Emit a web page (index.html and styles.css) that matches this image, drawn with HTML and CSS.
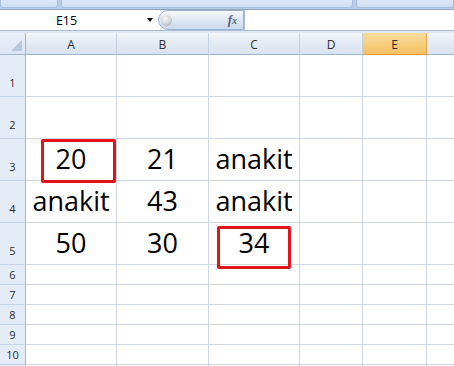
FILE: index.html
```html
<!DOCTYPE html>
<html>
<head>
<meta charset="utf-8">
<link rel="stylesheet" href="styles.css">
</head>
<body>
<div class="app">
  <div class="ribbon">
    <div class="tab t1"></div>
    <div class="tab t2"></div>
    <div class="tab t3"></div>
  </div>
  <div class="fbar">
    <div class="namebox"><span class="name">E15</span><span class="arrow"></span></div>
    <div class="pill"><span class="knob"></span><span class="fx">f<span class="x">x</span></span></div>
    <div class="input"></div>
  </div>
  <div class="gap"></div>
  <div class="sheet">
    <div class="grid">
      <div class="corner"><span class="tri"></span></div>
      <div class="ch">A</div><div class="ch">B</div><div class="ch">C</div><div class="ch">D</div><div class="ch sel">E</div><div class="ch last"></div>

      <div class="rh tall">1</div><div class="c tall"></div><div class="c tall"></div><div class="c tall"></div><div class="c tall"></div><div class="c tall"></div><div class="c tall last"></div>
      <div class="rh tall">2</div><div class="c tall"></div><div class="c tall"></div><div class="c tall"></div><div class="c tall"></div><div class="c tall"></div><div class="c tall last"></div>
      <div class="rh tall">3</div><div class="c tall">20</div><div class="c tall">21</div><div class="c tall">anakit</div><div class="c tall"></div><div class="c tall"></div><div class="c tall last"></div>
      <div class="rh tall">4</div><div class="c tall">anakit</div><div class="c tall">43</div><div class="c tall">anakit</div><div class="c tall"></div><div class="c tall"></div><div class="c tall last"></div>
      <div class="rh tall">5</div><div class="c tall">50</div><div class="c tall">30</div><div class="c tall">34</div><div class="c tall"></div><div class="c tall"></div><div class="c tall last"></div>

      <div class="rh">6</div><div class="c"></div><div class="c"></div><div class="c"></div><div class="c"></div><div class="c"></div><div class="c last"></div>
      <div class="rh">7</div><div class="c"></div><div class="c"></div><div class="c"></div><div class="c"></div><div class="c"></div><div class="c last"></div>
      <div class="rh">8</div><div class="c"></div><div class="c"></div><div class="c"></div><div class="c"></div><div class="c"></div><div class="c last"></div>
      <div class="rh">9</div><div class="c"></div><div class="c"></div><div class="c"></div><div class="c"></div><div class="c"></div><div class="c last"></div>
      <div class="rh">10</div><div class="c"></div><div class="c"></div><div class="c"></div><div class="c"></div><div class="c"></div><div class="c last"></div>
      <div class="rh"></div><div class="c"></div><div class="c"></div><div class="c"></div><div class="c"></div><div class="c"></div><div class="c last"></div>
    </div>
    <div class="mark mark1"></div>
    <div class="mark mark2"></div>
  </div>
</div>
</body>
</html>
```
FILE: styles.css
```css
* { box-sizing: border-box; }
html, body { margin: 0; padding: 0; background: #fff; }
.app {
  width: 454px;
  height: 366px;
  overflow: hidden;
  font-family: "Open Sans", "Noto Sans", sans-serif;
}
.ribbon {
  height: 9px;
  display: flex;
  gap: 3px;
  background: #b9cde6;
}
.tab {
  height: 8px;
  background: linear-gradient(#dbe7f6, #cfdef2);
  border: 1px solid #a9bfdc;
  border-top: none;
  border-radius: 0 0 3px 3px;
}
.t1 { width: 58px; }
.t2 { width: 292px; }
.t3 { flex: 1; }
.fbar {
  height: 22px;
  display: flex;
  border-top: 1px solid #8ba3c4;
  border-bottom: 1px solid #a7bbd6;
  background: #fff;
}
.namebox {
  width: 158px;
  display: flex;
  align-items: center;
  font-size: 12.5px;
  color: #000;
}
.name { flex: 1; text-align: center; padding-right: 14px; padding-top: 1px; }
.arrow {
  width: 0; height: 0;
  border-left: 3.5px solid transparent;
  border-right: 3.5px solid transparent;
  border-top: 4px solid #111;
  margin-right: 5px;
}
.pill {
  width: 86px;
  height: 20px;
  border: 1px solid #9fb3cf;
  border-radius: 10px 0 0 10px;
  background: linear-gradient(#f5f8fc, #dce6f3 55%, #c9d8ec);
  display: flex;
  align-items: center;
  justify-content: space-between;
  padding: 0 6px 0 2px;
}
.knob {
  width: 11px; height: 11px;
  border-radius: 50%;
  background: radial-gradient(circle at 40% 35%, #fafafa, #c9cdd3 60%, #9ea5ae);
}
.fx {
  font-family: "Liberation Serif", "DejaVu Serif", serif;
  font-style: italic;
  font-weight: bold;
  font-size: 13px;
  color: #5a6478;
}
.fx .x { font-size: 10px; }
.input { flex: 1; border-left: 1px solid #a7bbd6; }
.gap { height: 2px; background: #dfe8f4; }
.sheet { position: relative; }
.grid {
  display: grid;
  grid-template-columns: 26px 91px 92px 91px 63px 64px 1fr;
  grid-template-rows: 22px repeat(5, 42px) repeat(6, 20px);
}
.corner {
  background: linear-gradient(#e9eff8, #dce6f3);
  border-right: 1px solid #9eb6ce;
  border-bottom: 1px solid #9eb6ce;
  position: relative;
}
.tri {
  position: absolute;
  right: 3px; bottom: 3px;
  width: 0; height: 0;
  border-left: 11px solid transparent;
  border-bottom: 11px solid #b7c8de;
}
.ch {
  background: linear-gradient(#f3f6fb, #e3eaf4 50%, #d9e3f0);
  border-right: 1px solid #c3d1e3;
  border-bottom: 1px solid #9eb6ce;
  font-size: 12px;
  color: #2d2d2d;
  display: flex;
  align-items: center;
  justify-content: center;
  padding-top: 1px;
}
.ch.sel {
  background: linear-gradient(#f9dca0, #f6cd7c 55%, #f2c062);
  border-right: 1px solid #e9a94a;
  border-bottom: 1px solid #f29536;
}
.ch.last { border-right: none; }
.rh {
  background: #e4ecf7;
  border-right: 1px solid #9eb6ce;
  border-bottom: 1px solid #c5d3e6;
  font-size: 11px;
  color: #2d2d2d;
  display: flex;
  align-items: center;
  justify-content: center;
}
.rh.tall { align-items: flex-end; padding-bottom: 6px; }
.c {
  border-right: 1px solid #d0d7e5;
  border-bottom: 1px solid #d0d7e5;
  font-size: 27px;
  line-height: 1;
  color: #000;
  display: flex;
  align-items: flex-end;
  justify-content: center;
  padding-bottom: 8px;
}
.c.last { border-right: none; }
.mark {
  position: absolute;
  border: 3px solid #e0141b;
  border-radius: 2px;
}
.mark1 { left: 41px; top: 106px; width: 75px; height: 44px; }
.mark2 { left: 217px; top: 193px; width: 74px; height: 43px; }
```
